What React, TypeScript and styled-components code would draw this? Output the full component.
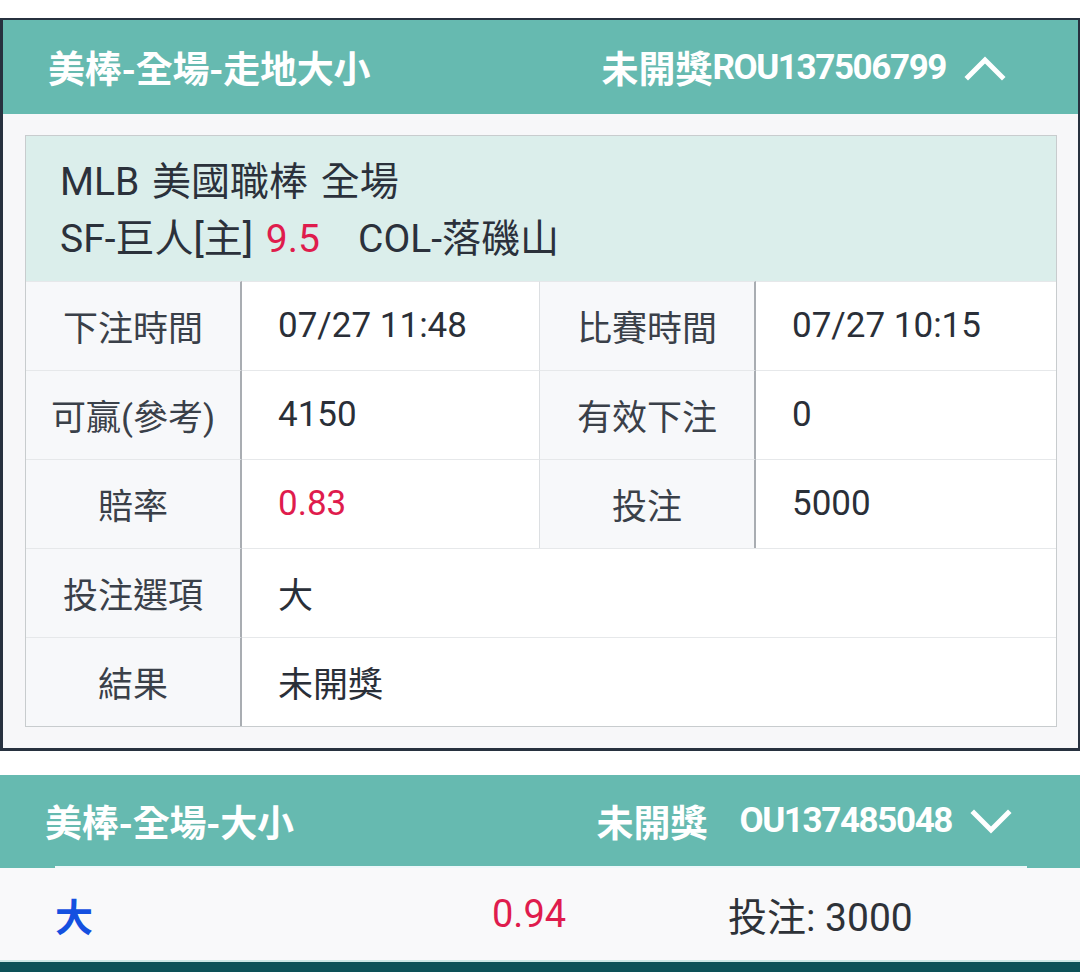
import styled, { createGlobalStyle } from "styled-components"

const GlobalStyle = createGlobalStyle`
  html, body {
    margin: 0;
    padding: 0;
    background: #ffffff;
  }
  body {
    font-family: Roboto, "Noto Sans CJK TC", "Noto Sans", sans-serif;
    color: #2d333d;
  }
`

const Page = styled.div`
  width: 1080px;
  height: 972px;
  overflow: hidden;
  padding-top: 18px;
  box-sizing: border-box;
  display: flex;
  flex-direction: column;
`

const Card = styled.div`
  border: 2px solid #27313f;
  border-left-width: 3px;
  border-bottom-width: 3px;
  background: #f7f7f9;
`

const Header = styled.div`
  height: 94px;
  background: #66bab0;
  display: flex;
  align-items: center;
  justify-content: space-between;
  padding: 0 72px 0 45px;
  color: #ffffff;
  font-weight: 700;
  font-size: 37px;
`

const Title = styled.div`
  letter-spacing: -0.3px;
`

const Status = styled.div`
  display: flex;
  align-items: center;
`

const StatusText = styled.span<{ $gap?: number }>`
  margin-right: ${(p) => p.$gap || 0}px;
`

const OrderNo = styled.span`
  font-size: 35px;
  letter-spacing: -1.4px;
  margin-right: 18px;
`

const Body = styled.div`
  padding: 21px 21px 21px 22px;
`

const Sheet = styled.div`
  border: 1px solid #c8ccce;
  background: #ffffff;
`

const Info = styled.div`
  background: #dbeeeb;
  padding: 18px 34px 13px;
  font-size: 39px;
  line-height: 57px;
  word-spacing: 3px;
  color: #2b313b;
`

const Red = styled.span`
  color: #df1c4d;
`

const Grid = styled.div`
  display: grid;
  grid-template-columns: 216px 298px 216px 1fr;
  grid-auto-rows: 89px;
  font-size: 35px;
`

const Cell = styled.div<{ $label?: boolean; $span?: number; $last?: boolean }>`
  display: flex;
  align-items: center;
  justify-content: ${(p) => (p.$label ? "center" : "flex-start")};
  padding-left: ${(p) => (p.$label ? 0 : 36)}px;
  padding-bottom: 2px;
  background: ${(p) => (p.$label ? "#f7f8fa" : "#ffffff")};
  color: ${(p) => (p.$label ? "#3a4049" : "#2a2f38")};
  grid-column: span ${(p) => p.$span || 1};
  border-right: ${(p) => (p.$last ? "none" : p.$label ? "2px solid #a9adb2" : "1px solid #dcdfe2")};
  border-top: 1px solid #e6e8ea;
`

const Second = styled.div`
  margin-top: 24px;
  background: #66bab0;
`

const SecondHeader = styled(Header)`
  height: 91px;
  padding: 0 68px 0 45px;
`

const Divider = styled.div`
  height: 2px;
  margin: 0 53px 0 55px;
  background: #eef8fa;
`

const Summary = styled.div`
  height: 92px;
  background: #f9f9fa;
  display: grid;
  grid-template-columns: 437px 236px 1fr;
  align-items: center;
  padding-left: 55px;
  font-size: 38px;
  border-bottom: 2px solid #cde7e6;
`

const Pick = styled.span`
  color: #1450e0;
  font-weight: 700;
`

const Stake = styled.span`
  color: #2e3238;
  font-size: 39px;
`

const BottomBar = styled.div`
  flex: 1;
  background: #0d5158;
`

const Chevron = ({ up }: { up?: boolean }) => (
  <svg width="42" height="28" viewBox="0 0 42 28">
    <path
      d={up ? "M4 24 L21 7 L38 24" : "M4 6 L21 23 L38 6"}
      fill="none"
      stroke="#ffffff"
      strokeWidth="5"
      strokeLinecap="square"
    />
  </svg>
)

const rows = [
  ["下注時間", "07/27 11:48", "比賽時間", "07/27 10:15"],
  ["可贏(參考)", "4150", "有效下注", "0"],
  ["賠率", "0.83", "投注", "5000"],
]

export default function App() {
  return (
    <>
      <GlobalStyle />
      <Page>
        <Card>
          <Header>
            <Title>美棒-全場-走地大小</Title>
            <Status>
              <StatusText>未開獎</StatusText>
              <OrderNo>ROU137506799</OrderNo>
              <Chevron up />
            </Status>
          </Header>
          <Body>
            <Sheet>
              <Info>
                <div>MLB 美國職棒 全場</div>
                <div>
                  SF-巨人[主] <Red>9.5</Red>&nbsp;&nbsp; COL-落磯山
                </div>
              </Info>
              <Grid>
                {rows.map((r) => (
                  <>
                    <Cell $label>{r[0]}</Cell>
                    <Cell>{r[0] === "賠率" ? <Red>{r[1]}</Red> : r[1]}</Cell>
                    <Cell $label>{r[2]}</Cell>
                    <Cell $last>{r[3]}</Cell>
                  </>
                ))}
                <Cell $label>投注選項</Cell>
                <Cell $span={3} $last>
                  大
                </Cell>
                <Cell $label>結果</Cell>
                <Cell $span={3} $last>
                  未開獎
                </Cell>
              </Grid>
            </Sheet>
          </Body>
        </Card>

        <Second>
          <SecondHeader>
            <Title>美棒-全場-大小</Title>
            <Status>
              <StatusText $gap={32}>未開獎</StatusText>
              <OrderNo>OU137485048</OrderNo>
              <Chevron />
            </Status>
          </SecondHeader>
          <Divider />
          <Summary>
            <Pick>大</Pick>
            <Red>0.94</Red>
            <Stake>投注: 3000</Stake>
          </Summary>
        </Second>
        <BottomBar />
      </Page>
    </>
  )
}
